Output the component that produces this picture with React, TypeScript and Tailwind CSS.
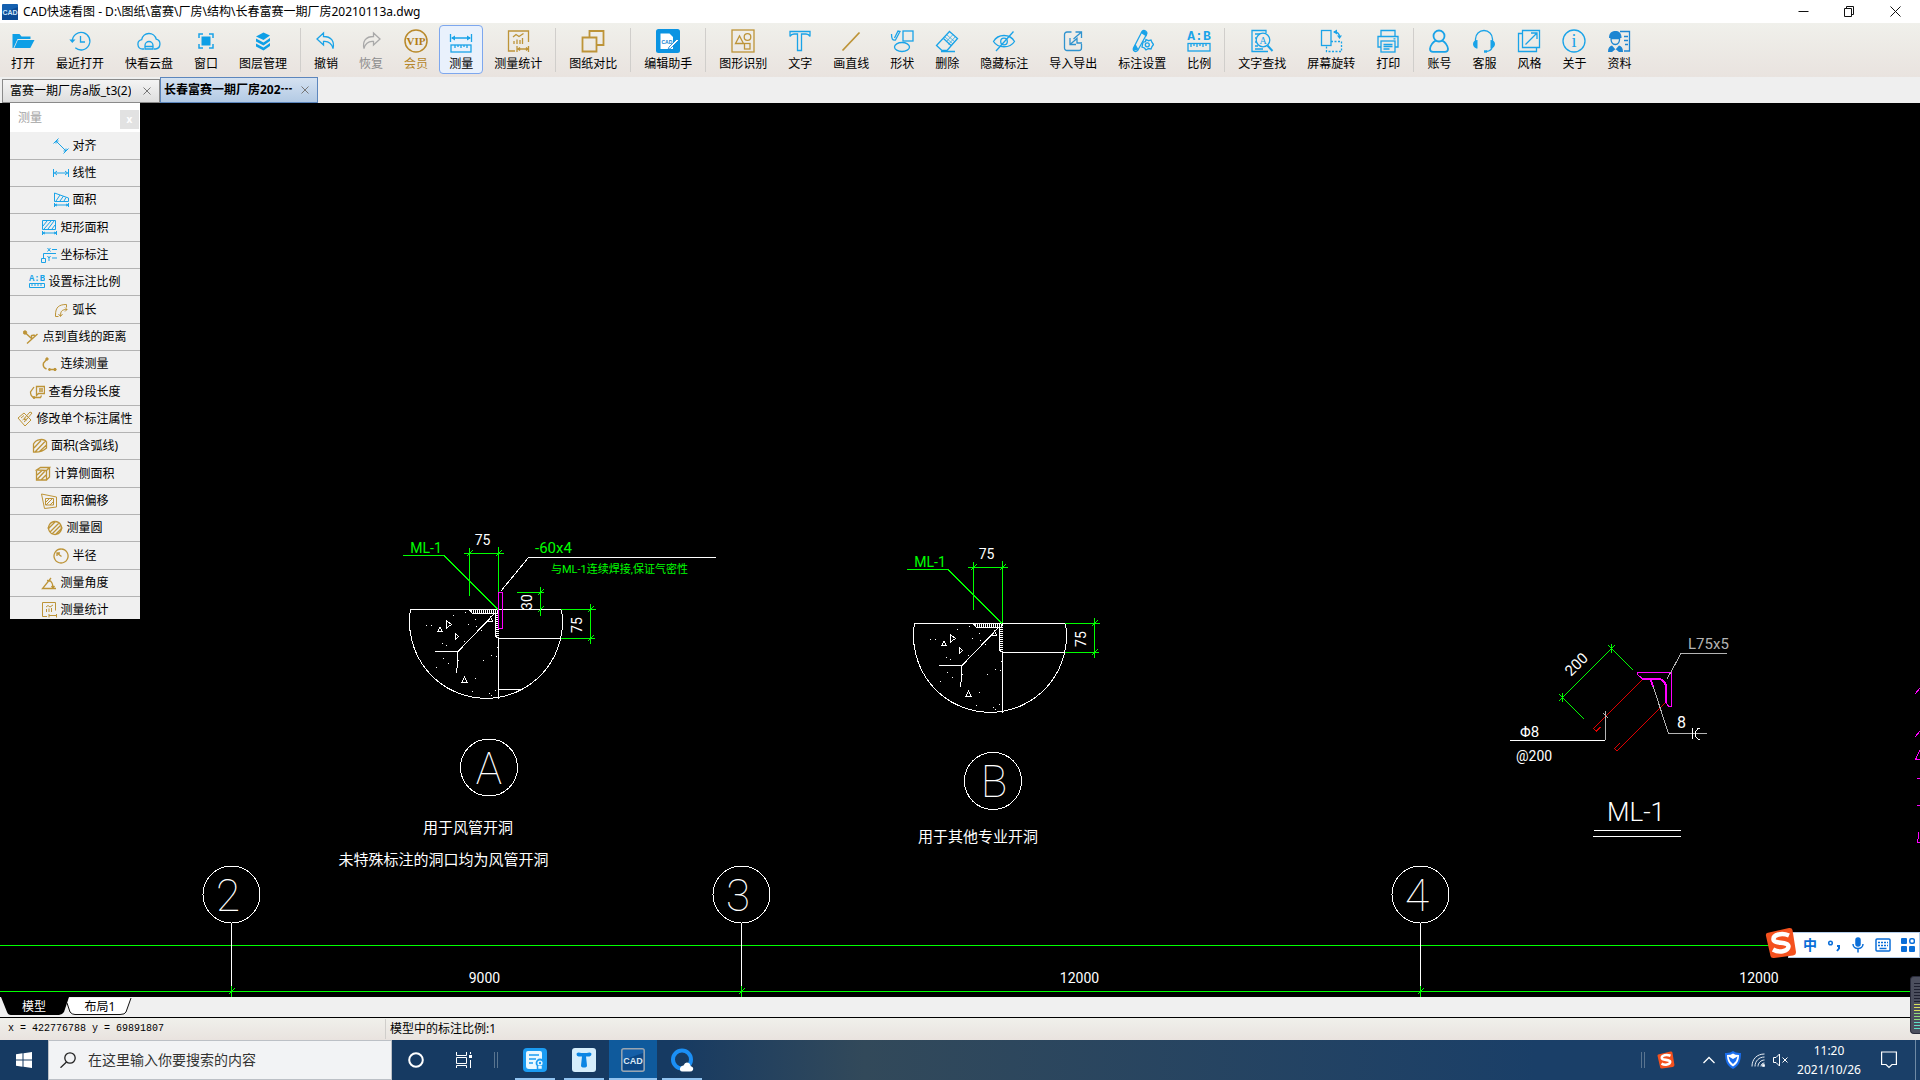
import type { ReactNode } from "react";
import clsx from "clsx";

const BLUE = "#1aa3e8";
const GOLD = "#bd9438";

type Tool = {
  label: string;
  icon: ReactNode;
  color?: string;
  tone?: "muted" | "gold";
  active?: boolean;
};

/* ---------- toolbar icons, all on a 24x24 grid ---------- */

const fileTools: Tool[] = [
  {
    label: "打开",
    icon: (
      <g fill="#0e9fe6" stroke="none">
        <path d="M1.5 5h7l2 2.5h9V10H6.5L2.5 19h-1z" />
        <path d="M6.8 11h16.7l-4.2 8H3.3z" />
      </g>
    ),
  },
  {
    label: "最近打开",
    icon: (
      <>
        <path d="M4.3 12a8.8 8.8 0 1 1 3 6.8" />
        <path d="M12.5 7v6h4.5" />
        <path d="M1.3 10.5l3 3.5 3.2-3.5z" fill={BLUE} stroke="none" />
      </>
    ),
  },
  {
    label: "快看云盘",
    icon: (
      <>
        <path d="M7 20H5.5a4.7 4.7 0 0 1-.8-9.3 7.4 7.4 0 0 1 14.5-.5A5 5 0 0 1 18.5 20H17" />
        <path d="M8 20v-3.5a4 4 0 0 1 8 0V20zM8 17.5h8" />
      </>
    ),
  },
  {
    label: "窗口",
    icon: (
      <>
        <path d="M5 9V5h4M15 5h4v4M19 15v4h-4M9 19H5v-4" strokeWidth="1.5" />
        <rect x="7.5" y="7.5" width="9" height="9" fill="#0e9fe6" stroke="none" />
      </>
    ),
  },
  {
    label: "图层管理",
    icon: (
      <g fill="#0e9fe6" stroke="none">
        <path d="M12.5 3.5l6.500 3-6.500 4.500-7.500-3.500z" />
        <path d="M5 9.500l7.500 4 6.500-4.500v3l-6.500 4.500L5 12.500z" />
        <path d="M5 14.500l7.500 4 6.500-4.500v3l-6.500 4.500L5 17.500z" />
      </g>
    ),
  },
];

const editTools: Tool[] = [
  {
    label: "撤销",
    icon: <path d="M9.5 4L3 10l6.5 6v-3.5c5-.5 8 1.500 9.500 7 1.800-7.500-2-12-9.500-12z" />,
  },
  {
    label: "恢复",
    color: "#a9a9a9",
    tone: "muted",
    icon: <path d="M14.5 4L21 10l-6.5 6v-3.5c-5-.5-8 1.500-9.500 7-1.800-7.500 2-12 9.500-12z" />,
  },
  {
    label: "会员",
    color: "#b98a2c",
    tone: "gold",
    icon: (
      <>
        <circle cx="12" cy="12" r="11" strokeWidth="1.5" />
        <text x="12" y="16" textAnchor="middle" fontFamily="Liberation Serif, serif" fontWeight="700" fontSize="11" fill="#b27c14" stroke="none">
          VIP
        </text>
      </>
    ),
  },
  {
    label: "测量",
    active: true,
    icon: (
      <>
        <path d="M1.500 5v8M22.500 5v8M3 9h18" />
        <path d="M2 9l4-2.500v5zM22 9l-4-2.500v5z" fill={BLUE} stroke="none" />
        <rect x="2" y="16" width="20" height="7" />
        <path d="M6 16v3M9 16v2M12 16v3M15 16v2M18 16v3" />
      </>
    ),
  },
  {
    label: "测量统计",
    color: GOLD,
    icon: (
      <>
        <path d="M9 22H2.5V2h20v11" />
        <path d="M7 8l3-2.5 3 2 4.5-3M8 12v3M11 10.5V15M14 11v4M16.500 9v6" />
        <path d="M11 17v6M22.500 17v6M11.5 20h11M14 18.5L12 20l2 1.5M20 18.5l2 1.5-2 1.5" />
      </>
    ),
  },
];

const compareTools: Tool[] = [
  {
    label: "图纸对比",
    color: GOLD,
    icon: <path d="M1.5 8.500h14v14h-14zM8.500 8V2h14v14H16" strokeWidth="1.8" />,
  },
];

const helperTools: Tool[] = [
  {
    label: "编辑助手",
    icon: (
      <g stroke="none">
        <rect x="0" y="0" width="24" height="24" rx="2.500" fill="#0b94e2" />
        <path d="M4.5 4.500h9l3.500 3.500v12H4.500z" fill="#fff" />
        <text x="5.500" y="15" fontFamily="Liberation Sans, sans-serif" fontWeight="700" fontSize="5" fill="#0b7fd0">
          CAD
        </text>
        <path d="M21 10l1.500 1.500-8 8-2.500 1 1-2.500z" fill="#fff" stroke="#0b7fd0" strokeWidth=".8" />
      </g>
    ),
  },
];

const drawTools: Tool[] = [
  {
    label: "图形识别",
    color: GOLD,
    icon: (
      <>
        <rect x="1" y="1" width="22" height="22" />
        <path d="M4.5 14.500L8.500 7l4 7.500z" />
        <circle cx="16.500" cy="8" r="3.300" />
        <rect x="13.500" y="14.500" width="5.500" height="5.500" />
      </>
    ),
  },
  {
    label: "文字",
    icon: <path d="M2 2.500h20v5c-1-2-2-2.500-4-2.500h-4.500v16.500h-4V5H6C4 5 3 5.500 2 7.500z" />,
  },
  { label: "画直线", color: GOLD, icon: <path d="M3.5 21.500L20.500 3.500" strokeWidth="1.8" /> },
  {
    label: "形状",
    icon: (
      <>
        <rect x="13" y="2" width="10" height="10" />
        <ellipse cx="12" cy="18" rx="7.500" ry="4.500" />
        <path d="M1.500 5c0 5 1 6.500 4 6L10 2.500l-2-.5-3.500 7" />
      </>
    ),
  },
  {
    label: "删除",
    icon: (
      <>
        <path d="M14.500 2.500l8 7-10.500 12H7l-5.500-5z" />
        <path d="M8.500 9.500l7.500 7M6 22.500h14" />
        <path d="M12 6l8 7M10 8l8 7M18 5.500L11 13M20 8l-6.500 7.500" strokeWidth=".7" />
      </>
    ),
  },
  {
    label: "隐藏标注",
    icon: (
      <>
        <path d="M1.500 12.500C6 4.500 18 4.500 22.500 12.500 18 19.500 6 19.500 1.500 12.500z" />
        <circle cx="12" cy="12.500" r="3.300" />
        <path d="M21.500 2.500L4 22" />
      </>
    ),
  },
  {
    label: "导入导出",
    color: "#2f93cf",
    icon: <path d="M10.500 3H6a2.500 2.500 0 0 0-2.500 2.500V19a2.500 2.500 0 0 0 2.500 2.500h12a2.500 2.500 0 0 0 2.500-2.500v-4M20.500 9V3H14.500M20.500 3l-8 7M9 9v6.500h6M9 15.500l7-6v4.500h5" />,
  },
  {
    label: "标注设置",
    icon: (
      <>
        <path d="M12 2.500c2-2.500 6 0 4.500 3L8 21c-2.500 3-5.500 1-4.500-2z" />
        <path d="M3 22c0-3 1.500-6 2.500-7l3 5.500z" fill={BLUE} stroke="none" />
        <path d="M11.500 3.500c2-3 6 0 4.500 3z" fill={BLUE} />
        <path d="M16 10.500l2.500 1.200 2.500-.7 1 2.500 1.500 2-1.500 2-1 2.500-2.500-.5-2.500 1.500-1.500-2-2.500-1 .5-2.500.5-2.500 2.500-.3z" fill="#eeebe8" />
        <circle cx="17.300" cy="15.800" r="2" />
      </>
    ),
  },
  {
    label: "比例",
    icon: (
      <>
        <text x="12" y="11" textAnchor="middle" fontFamily="Liberation Mono, monospace" fontWeight="700" fontSize="13" fill={BLUE} stroke="none">
          A:B
        </text>
        <rect x="1" y="14.500" width="22" height="7.500" />
        <path d="M4 15v3M7 15v2M10 15v3M13 15v2M16 15v3M19 15v2" />
      </>
    ),
  },
];

const viewTools: Tool[] = [
  {
    label: "文字查找",
    icon: (
      <>
        <path d="M16 4V1.500H2v21h16M5 5h5M5 9h1M5 13h1M5 17h3M5 20h8" />
        <circle cx="13" cy="11" r="6.800" fill="#eeece9" />
        <path d="M17.500 16.500l5 5.500" strokeWidth="2" />
        <text x="13" y="14.500" textAnchor="middle" fontFamily="Liberation Serif, serif" fontSize="10" fill={BLUE} stroke="none">
          A
        </text>
      </>
    ),
  },
  {
    label: "屏幕旋转",
    icon: (
      <>
        <rect x="2.500" y="1.500" width="9.500" height="15" />
        <path d="M12 12.500h10.500v10H7.500V17" strokeDasharray="2 1.500" />
        <path d="M15 3c4 0 5.500 2 5.500 5" />
        <path d="M14 3l4-2.500v5zM20.500 10L18 6.500h5z" fill={BLUE} stroke="none" />
      </>
    ),
  },
  {
    label: "打印",
    icon: (
      <>
        <path d="M5 7V1.500h14V7M5 18H2V7.500h20V18h-3" />
        <rect x="5" y="12" width="14" height="11" />
        <path d="M7.500 15.500h9M7.500 17.500h9M7.500 20h6M17.500 9.800h2" />
      </>
    ),
  },
];

const accountTools: Tool[] = [
  {
    label: "账号",
    icon: (
      <>
        <circle cx="12" cy="7" r="5.500" strokeWidth="1.8" />
        <path d="M9 11.500c-4 2-5.500 5-6 8.500 0 2 1 2.800 3 2.800h12c2 0 3-.8 3-2.800-.5-3.500-2-6.500-6-8.500" strokeWidth="1.8" />
      </>
    ),
  },
  {
    label: "客服",
    icon: (
      <>
        <path d="M3.500 13V10a8.500 8.500 0 0 1 17 0v3M20 18c0 2.500-1.500 4-6 4.500" />
        <path d="M5.500 11c-3 0-4.500 2-4.500 4s1.500 4.500 4.500 4.500zM18.500 11c3 0 4.500 2 4.500 4s-1.500 4.500-4.500 4.500z" fill={BLUE} stroke="none" />
        <path d="M12 22.500h3" strokeWidth="2.400" />
      </>
    ),
  },
  {
    label: "风格",
    icon: <path d="M5 4.500H1.500v18h18V19M5.500 1.500h17v17h-17zM8.500 15.500L20 4M14 4h6v6" />,
  },
  {
    label: "关于",
    icon: (
      <>
        <circle cx="12" cy="12" r="11" />
        <text x="12" y="18" textAnchor="middle" fontFamily="Liberation Serif, serif" fontSize="18" fill={BLUE} stroke="none">
          i
        </text>
      </>
    ),
  },
  {
    label: "资料",
    color: "#1d86d2",
    icon: (
      <>
        <path d="M13 2.500h9.500V22H17M17 7.500h4M17 11.500h4M18 15.500h3" />
        <path d="M2 9c0-4.500 2-6.500 5.500-7h2C13 2.500 14.500 5 14.500 9z" fill="#1d86d2" stroke="none" />
        <path d="M4 9.500c0 4 2 6 4.300 6s4.300-2 4.300-6z" />
        <path d="M1 23c0-4 1.500-6 4-6.500l3.500 4 3.500-4c2.500.5 4 2.500 4 6.500h-4l-3.500-3-3.500 3z" fill="#1d86d2" stroke="none" />
      </>
    ),
  },
];

const toolGroups = [fileTools, editTools, compareTools, helperTools, drawTools, viewTools, accountTools];

/* ---------- measure panel, icons on a 16x16 grid ---------- */

const dimArrow = "M1.5 11v4M15.5 11v4M2 13h13M4 12l-2 1 2 1M13 12l2 1-2 1";

const measures: { label: string; gold?: boolean; icon: ReactNode }[] = [
  { label: "对齐", icon: <path d="M.5 5.5L5.5.5M10.5 15.5l5-5M3 3l10 10M3 5.5V3h2.5M10.5 13H13v-2.5" /> },
  { label: "线性", icon: <path d="M.5 4v8M15.5 4v8M1 8h14M4 6L1.5 8 4 10M12 6l2.5 2-2.5 2" /> },
  { label: "面积", icon: <path d={`M1.5 1v8.5h14V6zM3 9l4-6M7 9l3.5-5M11 9l2-3.5${dimArrow}`} /> },
  { label: "矩形面积", icon: <path d={`M1.5.5h13v9h-13zM2 6l4-5M3 9l7-8M7 9l6-8M11 9l3-4${dimArrow}`} /> },
  { label: "坐标标注", icon: <path d="M.5 11.5h4v4h-4zM2.5 11V6.5H15M6.5 1l3 3.5M9.5 1l-3 3.5M11 2.5h5M6.5 9L8 11l1.5-2M8 11v3M11 11h5" /> },
  {
    label: "设置标注比例",
    icon: (
      <>
        <text x="8" y="7" textAnchor="middle" fontFamily="Liberation Mono, monospace" fontWeight="700" fontSize="9" fill={BLUE} stroke="none">
          A:B
        </text>
        <path d="M.5 9.5h15v4H.5zM3 10v2M6 10v2M9 10v2M12 10v2" />
      </>
    ),
  },
  { label: "弧长", gold: true, icon: <path d="M2.5 13C2.500 5 6 2.500 13.500 2.500v3M5.500 14.500h-3v-3M7.500 14C7.500 9 9 7.500 14 7.500M12 5.500l2 2-2 2M5.500 12l2 2.500 2-2.500" /> },
  {
    label: "点到直线的距离",
    gold: true,
    icon: (
      <>
        <path d="M4 14.5L14.5 5M2 3.5l6.5 6M8.5 9.5V6.500l2.500-.5 1 1.500" strokeWidth="1.4" />
        <circle cx="2" cy="3.5" r="1.700" fill={GOLD} />
      </>
    ),
  },
  {
    label: "连续测量",
    gold: true,
    icon: (
      <>
        <path d="M6 3L2.500 7c-.8 3 .5 5 3 6M8 13.500h6" strokeWidth="1.5" />
        <circle cx="6" cy="3" r="1.200" fill={GOLD} />
        <circle cx="8.500" cy="13.500" r="1" fill={GOLD} />
        <circle cx="14" cy="13.500" r="1.200" fill={GOLD} />
      </>
    ),
  },
  {
    label: "查看分段长度",
    gold: true,
    icon: (
      <>
        <path d="M5 3L1.500 8c0 3 1 4.500 3 5.500h7l1-2M7.500 2.500h8v7h-6l-2 2zM10 5h4M10 7h4" strokeWidth="1.300" />
        <circle cx="5" cy="13.500" r="1" fill={GOLD} />
      </>
    ),
  },
  { label: "修改单个标注属性", gold: true, icon: <path d="M1 7l6-5 7 7-6 6zM4 7l3-2.500M5.500 9l3-2.500M7 11l3-2.500M15 2l-5 6-2.500 1 .5-2.500 5-5.500z" /> },
  { label: "面积(含弧线)", gold: true, icon: <path d="M1.5 14V6C4 1 12 0 14.500 4v6c-3 3-6 4.500-13 4zM2 10l7-7.500M3 14L13.500 3M7 14l7.500-7" strokeWidth="1.3" /> },
  { label: "计算侧面积", gold: true, icon: <path d="M1.5 4l4-2.500h9l-3 3zM1.500 4v10h10V4.500M11.500 14l3-3v-9M2 9l5-4.500M2.500 13L10 5M6 14l5-5" strokeWidth="1.3" /> },
  { label: "面积偏移", gold: true, icon: <path d="M.5 1l15 3v10l-12 1.500zM4.500 5.500h8V12h-8zM5 9l3-3M5 12l6-6M9 12l3-3" /> },
  { label: "测量圆", gold: true, icon: <path d="M8 1.500a6.500 6.500 0 1 0 .1 0M2 8l6-6M3 12l9-9M5 14l9-9M9 14l5-5M.5 8h2M13.500 8h2" strokeWidth="1.3" /> },
  { label: "半径", gold: true, icon: <path d="M8 1a7 7 0 1 0 .1 0M8.500 8.500L4 5M4 8V5h3" strokeWidth="1.3" /> },
  { label: "测量角度", gold: true, icon: <path d="M15 13.500H1.500L10 3M8 5c3 1.500 4 4 4 8M6 5.500L9.500 6M10.500 11l1.500 2 1.500-2" strokeWidth="1.300" /> },
  { label: "测量统计", gold: true, icon: <path d="M6 14.500H1.500v-14h13v8M5 5l2-1.500L9 5l3-2M5.500 7v3M8 6.500V10M10.500 6v4M8 12v3.500M15.500 12v3.500M8 13.500h7" /> },
];

const windowButtons = [
  { name: "最小化", d: "M.5 5.5h10" },
  { name: "还原", d: "M.5 2.5h7v8h-7zM2.5 2.5v-2h7v8h-2" },
  { name: "关闭", d: "M.5.5l10 10M10.5.5l-10 10" },
];

function TitleBar() {
  return (
    <header className="flex h-[23px] shrink-0 items-center bg-white px-0.5">
      <svg viewBox="0 0 16 16" className="mr-[5px] size-4">
        <rect width="16" height="16" rx="1" fill="#1460b0" />
        <path d="M0 16V9l16-6v13z" fill="#0b4a94" />
        <text x="8" y="11" textAnchor="middle" fontFamily="Liberation Sans, sans-serif" fontSize="7" fontWeight="700" fill="#cfe6fa">
          CAD
        </text>
      </svg>
      <h1 className="flex-1 truncate text-xs">CAD快速看图 - D:\图纸\富赛\厂房\结构\长春富赛一期厂房20210113a.dwg</h1>
      {windowButtons.map((b) => (
        <button key={b.name} aria-label={b.name} className="flex h-5 w-[46px] items-center justify-center">
          <svg viewBox="0 0 11 11" className="size-[11px]" fill="none" stroke="#111">
            <path d={b.d} />
          </svg>
        </button>
      ))}
    </header>
  );
}

function ToolButton({ tool }: { tool: Tool }) {
  return (
    <button
      className={clsx(
        "flex h-[49px] shrink-0 flex-col items-center gap-[3px] rounded border px-[9px] pt-[3px] text-xs leading-4",
        tool.active ? "border-[#7da7ee] bg-[#e9f1fc]" : "border-transparent",
        tool.tone === "muted" && "text-[#8d8d8d]",
        tool.tone === "gold" && "text-[#b5862a]"
      )}
    >
      <svg viewBox="0 0 24 24" className="size-6" fill="none" stroke={tool.color ?? BLUE} strokeWidth="1.3">
        {tool.icon}
      </svg>
      <span className="whitespace-nowrap">{tool.label}</span>
    </button>
  );
}

function Toolbar() {
  return (
    <nav className="flex h-[54px] shrink-0 items-start gap-px overflow-hidden bg-linear-to-b from-[#f0f0eb] to-[#e9e3df] pl-px pt-0.5">
      {toolGroups.map((group, i) => (
        <div key={i} className="flex items-start gap-px">
          {i > 0 && <span className="mx-0.5 mt-[3px] h-11 w-px bg-[#d0cecb]" />}
          {group.map((t) => (
            <ToolButton key={t.label} tool={t} />
          ))}
        </div>
      ))}
    </nav>
  );
}

function FileTab({ name, active }: { name: string; active?: boolean }) {
  return (
    <div
      className={clsx(
        "flex w-[158px] items-center justify-between border pr-2 text-xs",
        active
          ? "h-[26px] border-[#5c86bd] bg-linear-to-b from-[#d5e2f1] to-[#b3cae4] pl-[3px] font-bold"
          : "h-6 border-[#8a8a8a] bg-linear-to-b from-[#f4f4f4] to-[#dedede] pl-[7px]"
      )}
    >
      <button className="truncate">{name}</button>
      <button aria-label={`关闭 ${name}`}>
        <svg viewBox="0 0 8 8" className="size-2" fill="none" stroke="#777">
          <path d="M.5.5l7 7M7.5.5l-7 7" />
        </svg>
      </button>
    </div>
  );
}

function MeasurePanel() {
  return (
    <aside className="absolute left-2.5 top-0 h-[516px] w-[130px] overflow-hidden bg-[#f0f0f0] text-xs">
      <div className="flex h-[29px] items-center justify-between bg-white pl-2 pr-px pt-1 text-[#a3a3a3]">
        <h2 className="pb-1">测量</h2>
        <button aria-label="关闭测量" className="size-[19px] bg-[#e2e2e2] text-[10px] font-bold text-white">
          x
        </button>
      </div>
      <ul>
        {measures.map((m) => (
          <li key={m.label} className="h-[27px] border-b border-[#b3b3b3] nth-[3n+1]:h-7">
            <button className="flex size-full items-center justify-center gap-[3px] whitespace-nowrap">
              <svg viewBox="0 0 16 16" className="size-4" fill="none" stroke={m.gold ? GOLD : BLUE}>
                {m.icon}
              </svg>
              {m.label}
            </button>
          </li>
        ))}
      </ul>
    </aside>
  );
}

/* ---------- drawing ---------- */

// small slash across a dimension line
function Tick({ x, y }: { x: number; y: number }) {
  return <path d={`M${x - 3} ${y + 3}l6 -6`} />;
}

const speckles = [
  [426, 625], [431, 625], [453, 615], [465, 612], [475, 619], [468, 624], [476, 626], [481, 630], [442, 643],
  [446, 645], [464, 641], [443, 658], [448, 663], [436, 667], [458, 660], [483, 660], [491, 655], [496, 656],
  [475, 678], [472, 691], [489, 693], [491, 695], [495, 690], [497, 647],
];

// slab section with the embedded angle, shared by both openings
function SlabSection() {
  return (
    <>
      <g stroke="#fff">
        <path d="M410.5 609.5H561.5A76.5 76.5 0 1 1 410.5 609.5z" />
        <path d="M498.5 638V699M498 638.5H561M496 612L458 651.5H435M457.5 651V663L456.5 673" />
        <path d="M469.5 610l3 3.5h22.5v22l3.5 3" />
        <path d="M446.500 621v7l5-3.500zM455.500 634v5l3-2.500zM438 631l2-4 2 4zM462 682l2.500-5 2.500 5zM488 621l2.500-4 2 4z" />
      </g>
      <path d="M471 611.5H497.5V638" stroke="#fff" strokeWidth="3" strokeDasharray="1 1" />
      {speckles.map(([x, y]) => (
        <rect key={`${x}-${y}`} x={x} y={y} width="1" height="1" fill="#fff" />
      ))}
      <g stroke="#0f0">
        <path d="M403 555.5H444L498 609.5" />
        <path d="M464 553.5H504M469.5 548V596M498.5 547V609" />
        <path d="M561 609.5H596M561 638.5H595M590.5 604V644" />
        <Tick x={469.5} y={553.5} />
        <Tick x={498.5} y={553.5} />
        <Tick x={590.5} y={609.5} />
        <Tick x={590.5} y={638.5} />
      </g>
      <text x="426" y="553" fontSize="14" textAnchor="middle" fill="#0f0">ML-1</text>
      <text x="482.5" y="545" fontSize="14" textAnchor="middle">75</text>
      <text transform="translate(582 625) rotate(-90)" fontSize="14" textAnchor="middle">75</text>
    </>
  );
}

const axes = [
  { n: "2", x: 231.5, tx: 228 },
  { n: "3", x: 741.5, tx: 738 },
  { n: "4", x: 1420.5, tx: 1417 },
];

function Drawing() {
  return (
    <svg
      viewBox="0 103 1920 894"
      preserveAspectRatio="xMidYMax slice"
      className="size-full font-['Liberation_Sans_Narrow','Roboto','Noto_Sans_CJK_SC',sans-serif]"
      fill="none"
      shapeRendering="crispEdges"
    >
      <g fill="#fff">
        <g fill="none" stroke="#0f0">
          <path d="M0 945.5H1920M0 991.5H1920" />
          {axes.map((a) => (
            <g key={a.n}>
              <path d={`M${a.x} 923V986`} stroke="#fff" />
              <path d={`M${a.x} 986V997`} />
              <Tick x={a.x} y={991.5} />
              <circle cx={a.x} cy="894.5" r="28.5" stroke="#fff" />
            </g>
          ))}
        </g>
        {axes.map((a) => (
          <text key={a.n} x={a.tx} y="911" fontSize="44" fontWeight="100" textAnchor="middle">{a.n}</text>
        ))}
        <text x="484.5" y="983" fontSize="14" textAnchor="middle">9000</text>
        <text x="1079.5" y="983" fontSize="14" textAnchor="middle">12000</text>
        <text x="1759" y="983" fontSize="14" textAnchor="middle">12000</text>
      </g>

      {/* detail A */}
      <g fill="#fff">
        <g className="[&_path]:fill-none"><SlabSection /></g>
        <g fill="none">
          <path d="M501 591L528.5 557.5H716M498 689.5H523" stroke="#fff" />
          <rect x="498.5" y="592.5" width="4" height="36" stroke="#f0f" />
          <path d="M517 592.5H544M540.5 587V616" stroke="#0f0" />
          <g stroke="#0f0">
            <Tick x={540.5} y={592.5} />
            <Tick x={540.5} y={609.5} />
          </g>
          <circle cx="489" cy="767.5" r="28.5" stroke="#fff" />
        </g>
        <text x="535" y="553" fontSize="15" fill="#0f0">-60x4</text>
        <text x="551" y="573" fontSize="11" fill="#0f0">与ML-1连续焊接,保证气密性</text>
        <text transform="translate(532 602) rotate(-90)" fontSize="14" textAnchor="middle">30</text>
        <text x="489" y="784" fontSize="44" fontWeight="100" textAnchor="middle">A</text>
        <text x="468" y="833" fontSize="15" textAnchor="middle">用于风管开洞</text>
        <text x="443.5" y="865" fontSize="15" textAnchor="middle">未特殊标注的洞口均为风管开洞</text>
      </g>

      {/* detail B */}
      <g fill="#fff">
        <g transform="translate(504 14)" className="[&_path]:fill-none"><SlabSection /></g>
        <circle cx="993" cy="781" r="28.5" fill="none" stroke="#fff" />
        <text x="994" y="797" fontSize="44" fontWeight="100" textAnchor="middle">B</text>
        <text x="978" y="842" fontSize="15" textAnchor="middle">用于其他专业开洞</text>
      </g>

      {/* ML-1 anchor */}
      <g>
        <path d="M1633 670L1611.5 648.5L1562.5 697.5L1584 719M1608 645l7 7M1608 652l7-7M1611.5 644v9M1559 694l7 7M1559 701l7-7M1562.5 693v9" stroke="#0f0" />
        <path d="M1642 680L1593.5 728.5l3 2.5 4-4M1666 702L1617 751l-2.500-2.500 5-5" stroke="#e00000" />
        <path d="M1642 678.5L1637.5 674.5V672.5H1671.5V706.5H1669L1666 703" stroke="#f0f" />
        <path d="M1642 679H1659Q1666 680 1666 688V703M1651 680l2 7" stroke="#f0f" strokeWidth="2" />
        <path d="M1667 679L1681 653.5H1727M1653 686L1668.5 733.5H1707M1605.5 740V711M1603 713l5 5" stroke="#b4b4b4" />
        <path d="M1510 740.5H1605M1594 830.5H1681M1593 836.5H1681M1692.5 728V739M1700 728.5h-2l-3 4v3l3 3.500h2" stroke="#fff" />
        <path d="M1915 694l5-6M1915 737l5-6M1920 750l-4.500 9.500h4.500M1917 778.5h3M1917 805.5h3M1919 832l-1.500 10.500h2.500" stroke="#f0f" />
        <text x="1688" y="649" fontSize="15" fill="#b4b4b4">L75x5</text>
        <g fill="#fff">
          <text transform="translate(1580 668) rotate(-45)" fontSize="15" textAnchor="middle">200</text>
          <text x="1681.5" y="728" fontSize="16" textAnchor="middle">8</text>
          <text x="1520" y="737" fontSize="15">Φ8</text>
          <text x="1516" y="761" fontSize="14">@200</text>
          <text x="1636" y="821" fontSize="26" fontWeight="300" textAnchor="middle">ML-1</text>
        </g>
      </g>
    </svg>
  );
}

function SogouMark({ className }: { className: string }) {
  return (
    <svg viewBox="0 0 32 32" className={className}>
      <path d="M2 6L24 1q3-.5 3.500 2L31 25q0 3-3 3.500L9 31q-3 .5-3.500-2L1 9q-.5-2.500 1-3z" fill="#f4511e" />
      <path d="M24 8.500C17 5.500 8 7.500 8.500 12.500 9 17.500 23.500 14 23.500 19.500 23 24.500 14 26 8 22.500" fill="none" stroke="#fff" strokeWidth="4.500" />
    </svg>
  );
}

function ImeBar() {
  return (
    <div className="absolute bottom-[39px] right-0 flex h-[26px] w-[132px] items-center justify-end gap-2.5 border border-[#b4cdea] bg-white pr-1 text-[#0a6ed8]">
      <SogouMark className="absolute -left-6 -top-1.5 size-8" />
      <button className="text-sm font-bold leading-5">中</button>
      <button aria-label="标点" className="w-3.5">
        <svg viewBox="0 0 14 14" className="size-3.5" fill="none" stroke="currentColor" strokeWidth="1.5">
          <circle cx="3.500" cy="5" r="1.800" />
          <path d="M10 8h2v2.500L10 13" strokeWidth="2" />
        </svg>
      </button>
      <button aria-label="语音">
        <svg viewBox="0 0 14 16" className="h-4 w-3.5" fill="none" stroke="currentColor" strokeWidth="1.5">
          <rect x="5" y="1" width="4" height="8" rx="2" fill="currentColor" />
          <path d="M2 7c0 6 10 6 10 0M7 12v3.500" />
        </svg>
      </button>
      <button aria-label="软键盘">
        <svg viewBox="0 0 16 14" className="h-3.5 w-4" fill="none" stroke="currentColor" strokeWidth="1.5">
          <rect x="1" y="1" width="14" height="12" rx="1" />
          <path d="M3 4.500h10M3 7.500h10" strokeDasharray="2 1" />
          <path d="M4.500 10.500h7" />
        </svg>
      </button>
      <button aria-label="工具箱">
        <svg viewBox="0 0 14 14" className="size-3.5" fill="currentColor">
          <rect width="6" height="6" rx="1" />
          <rect y="8" width="6" height="6" rx="1" />
          <rect x="8" y="8" width="6" height="6" rx="1" />
          <rect x="8.800" y=".8" width="4.500" height="4.500" rx="1.500" fill="none" stroke="currentColor" strokeWidth="1.500" />
        </svg>
      </button>
    </div>
  );
}

function LevelMeter() {
  return (
    <div className="absolute bottom-[46px] right-0 h-[58px] w-2.5 rounded-l border border-r-0 border-[#2a2c3c] bg-[#4c4f5e]">
      <svg viewBox="0 0 9 56" className="size-full">
        <path d="M3 6.5h6M3 9.5h6M3 12.5h6M3 15.5h6M3 18.5h6M3 21.5h6M3 24.5h6" stroke="#1e2030" />
        <path d="M3 27.5h6M3 30.5h6M3 33.5h6" stroke="#d8e05a" />
        <path d="M3 36.5h6M3 39.5h6M3 42.5h6" stroke="#8fdc7c" />
        <path d="M3 45.5h6M3 48.5h6M3 51.5h6" stroke="#5ce0c8" />
      </svg>
    </div>
  );
}

function LayoutTabs() {
  return (
    <div className="flex h-[21px] shrink-0 items-start border-b border-black bg-[#f0f0f0] pl-px text-xs leading-5">
      <button className="relative isolate w-[66px] text-white">
        <svg viewBox="0 0 68 19" className="absolute left-0 top-0 -z-10 h-[19px] w-[68px]">
          <path d="M0 0H68L63 15Q61 18 58 18H10Q7 18 6 15z" />
        </svg>
        模型
      </button>
      <button className="relative isolate w-[66px]">
        <svg viewBox="0 0 66 19" className="absolute left-0 top-0 -z-10 h-[19px] w-[66px]" fill="#fff" stroke="#111">
          <path d="M1 6l3 9Q5 17.5 8 17.5H53Q58 17.5 59 15L64 1H2z" stroke="none" />
          <path d="M0 6l3 9Q5 17.5 8 17.5H53Q58 17.5 59 15L64 1" fill="none" />
        </svg>
        布局1
      </button>
    </div>
  );
}

const apps: { name: string; active?: boolean; icon: ReactNode }[] = [
  {
    name: "证书助手",
    icon: (
      <>
        <rect width="24" height="24" rx="4" fill="#1b9cf2" />
        <path d="M3 5q0-2 2-2h12q2 0 2 2v16H6q-3 0-3-3z" fill="#e9f8ff" />
        <path d="M6 7h10M6 11h7M6 15h4" stroke="#1b9cf2" strokeWidth="1.5" />
        <circle cx="17" cy="15" r="3.500" fill="#e9f8ff" stroke="#1b9cf2" strokeWidth="1.800" />
        <path d="M14.500 18v3.500h5V18" fill="#e9f8ff" stroke="#1b9cf2" strokeWidth="1.5" />
        <circle cx="17" cy="15" r="1.200" fill="#1b9cf2" />
      </>
    ),
  },
  {
    name: "天正",
    icon: (
      <>
        <rect width="24" height="24" rx="3" fill="#d6eefb" />
        <path d="M4.5 6q0-1.500 2-1.500 5.500 1 11 0 2 0 2 1.500t-2 2.500H14l1 9q0 2-3 2t-3-2l1-9H6.500q-2-.5-2-2.500z" fill="#0b86e4" />
      </>
    ),
  },
  {
    name: "CAD快速看图",
    active: true,
    icon: (
      <>
        <rect x=".8" y=".8" width="22.400" height="22.400" rx="2" fill="#155fa8" stroke="#9aa5b0" strokeWidth="1.500" />
        <path d="M2 22V12L22 5v17z" fill="#0d4886" />
        <text x="12" y="16" textAnchor="middle" fontFamily="Liberation Sans, sans-serif" fontSize="9" fontWeight="700" fill="#dbe9f6">
          CAD
        </text>
      </>
    ),
  },
  {
    name: "浏览器",
    icon: (
      <>
        <circle cx="12" cy="11.500" r="9" fill="none" stroke="#1b8ff5" strokeWidth="4" />
        <path d="M10 22q-.5-4 3.500-4.500 2-4.500 6-2 1 1 1 2.500 3.500 1 2.500 4-1 1.500-3 1.500h-7.500q-2 0-2.500-1.500z" fill="#fff" />
      </>
    ),
  },
];

function Taskbar() {
  return (
    <footer className="flex h-10 shrink-0 items-center bg-linear-to-r from-[#163a62] from-35% via-[#32495a] via-45% to-[#1a3f68] to-80% text-white">
      <button aria-label="开始" className="flex h-full w-12 items-center justify-center">
        <svg viewBox="0 0 16 16" className="size-4" fill="#fff">
          <path d="M0 2.300l6.500-1V7.500H0zM7.500 1.200L16 0v7.500H7.500zM0 8.500h6.500v6.300L0 13.800zM7.500 8.500H16V16l-8.500-1.200z" />
        </svg>
      </button>
      <label className="flex h-full w-[344px] items-center gap-3 border border-[#bcc0c6] bg-[#f2f3f5] pl-[11px]">
        <svg viewBox="0 0 16 16" className="size-4 shrink-0" fill="none" stroke="#222" strokeWidth="1.300">
          <circle cx="10" cy="6" r="5.200" />
          <path d="M6.5 10L.5 15.700" />
        </svg>
        <input
          aria-label="搜索"
          placeholder="在这里输入你要搜索的内容"
          className="min-w-0 flex-1 bg-transparent text-sm text-black outline-none placeholder:text-[#333]"
        />
      </label>
      <button aria-label="Cortana" className="flex h-full w-12 items-center justify-center">
        <svg viewBox="0 0 16 16" className="size-4" fill="none" stroke="#fff" strokeWidth="2">
          <circle cx="8" cy="8" r="6.800" />
        </svg>
      </button>
      <button aria-label="任务视图" className="flex h-full w-12 items-center justify-center">
        <svg viewBox="0 0 16 16" className="size-4" fill="none" stroke="#fff">
          <path d="M.5 0v3.500h10V0M.5 5.500h10v6H.5zM.5 16v-2.500h10V16M14.500 0v2M14.500 8v8" />
          <path d="M13 3h3v3h-3z" fill="#fff" stroke="none" />
        </svg>
      </button>
      <span className="ml-1.5 mr-[13px] h-4 w-1 border-x border-[#5a7590]" />
      <div className="flex h-full gap-px">
        {apps.map((a) => (
          <button
            key={a.name}
            aria-label={a.name}
            className={clsx("flex h-full w-12 flex-col items-center justify-between pt-2", a.active && "bg-[#0f5a9c]")}
          >
            <svg viewBox="0 0 24 24" className="size-6">{a.icon}</svg>
            <span className={clsx("h-0.5 bg-[#92c3ef]", a.active ? "w-full" : "w-10")} />
          </button>
        ))}
      </div>

      <div className="ml-auto flex h-full items-center">
        <span className="mr-3 h-4 w-1 border-x border-[#5a7590]" />
        <SogouMark className="mr-7 size-[18px]" />
        <button aria-label="显示隐藏的图标" className="mr-2.5">
          <svg viewBox="0 0 12 8" className="h-2 w-3" fill="none" stroke="#fff" strokeWidth="1.3">
            <path d="M.5 7L6 1.5 11.5 7" />
          </svg>
        </button>
        <svg viewBox="0 0 16 18" className="mr-2.5 h-[18px] w-4">
          <path d="M0 2q5 .5 8-2 3 2.500 8 2c0 8-2 13-8 16C2 15 0 10 0 2z" fill="#1b6ff0" />
          <path d="M2 4q4 0 6-1.500Q10 4 14 4c0 6-2 9-6 11.500C4 13 2 10 2 4z" fill="#fff" />
          <path d="M3.500 5.500L8 8l4.500-2.500L11 10l-3 3-3-3z" fill="#1b6ff0" />
        </svg>
        <svg viewBox="0 0 14 14" className="mr-2 size-3.5" fill="none" stroke="#e8eef4">
          <path d="M1 13.500C1 6 6 1 13.500 1M4 13.500C4 8 8 4 13.500 4M7 13.500C7 10 10 7 13.500 7M10 13.500c0-2 1.500-3.500 3.500-3.500" />
          <circle cx="12.500" cy="12.500" r="1.200" fill="#fff" />
        </svg>
        <svg viewBox="0 0 16 14" className="mr-1.5 h-3.5 w-4" fill="none" stroke="#fff">
          <path d="M.5 4.500H3L6.500 1v12L3 9.500H.5zM9.500 4.500l5 5M14.500 4.500l-5 5" />
        </svg>
        <div className="w-[68px] text-center text-xs leading-[19px]">
          <time className="block">11:20</time>
          <time className="block">2021/10/26</time>
        </div>
        <button aria-label="通知" className="mx-[18px]">
          <svg viewBox="0 0 16 18" className="h-[18px] w-4" fill="none" stroke="#fff" strokeWidth="1.2">
            <path d="M.6 1h14.800v12.500H11L8 16.500l-3-3H.6z" />
          </svg>
        </button>
        <span className="mr-1 h-full w-px bg-[#6f8aa5]" />
      </div>
    </footer>
  );
}

export default function App() {
  return (
    <div className="flex h-screen flex-col overflow-hidden bg-[#f0f0f0] font-['Noto_Sans','Noto_Sans_CJK_SC',sans-serif] text-black">
      <TitleBar />
      <Toolbar />
      <div className="flex h-[26px] shrink-0 items-end bg-[#efefef] pl-0.5">
        <FileTab name="富赛一期厂房a版_t3(2)" />
        <FileTab name="长春富赛一期厂房202┅" active />
      </div>
      <main className="relative min-h-0 flex-1 bg-black">
        <div className="size-full overflow-hidden">
          <Drawing />
        </div>
        <MeasurePanel />
        <ImeBar />
      </main>
      <div className="flex shrink-0 flex-col">
        <LayoutTabs />
        <div className="flex h-[22px] items-center bg-linear-to-b from-[#f0f0eb] to-[#e9e3df] text-xs">
          <span className="w-[385px] pl-2 font-['Liberation_Mono',monospace] text-[10px]">x = 422776788 y = 69891807</span>
          <span className="h-5 border-l border-[#d0cecb] pl-1 leading-5">模型中的标注比例:1</span>
        </div>
      </div>
      <div className="relative">
        <LevelMeter />
        <Taskbar />
      </div>
    </div>
  );
}
